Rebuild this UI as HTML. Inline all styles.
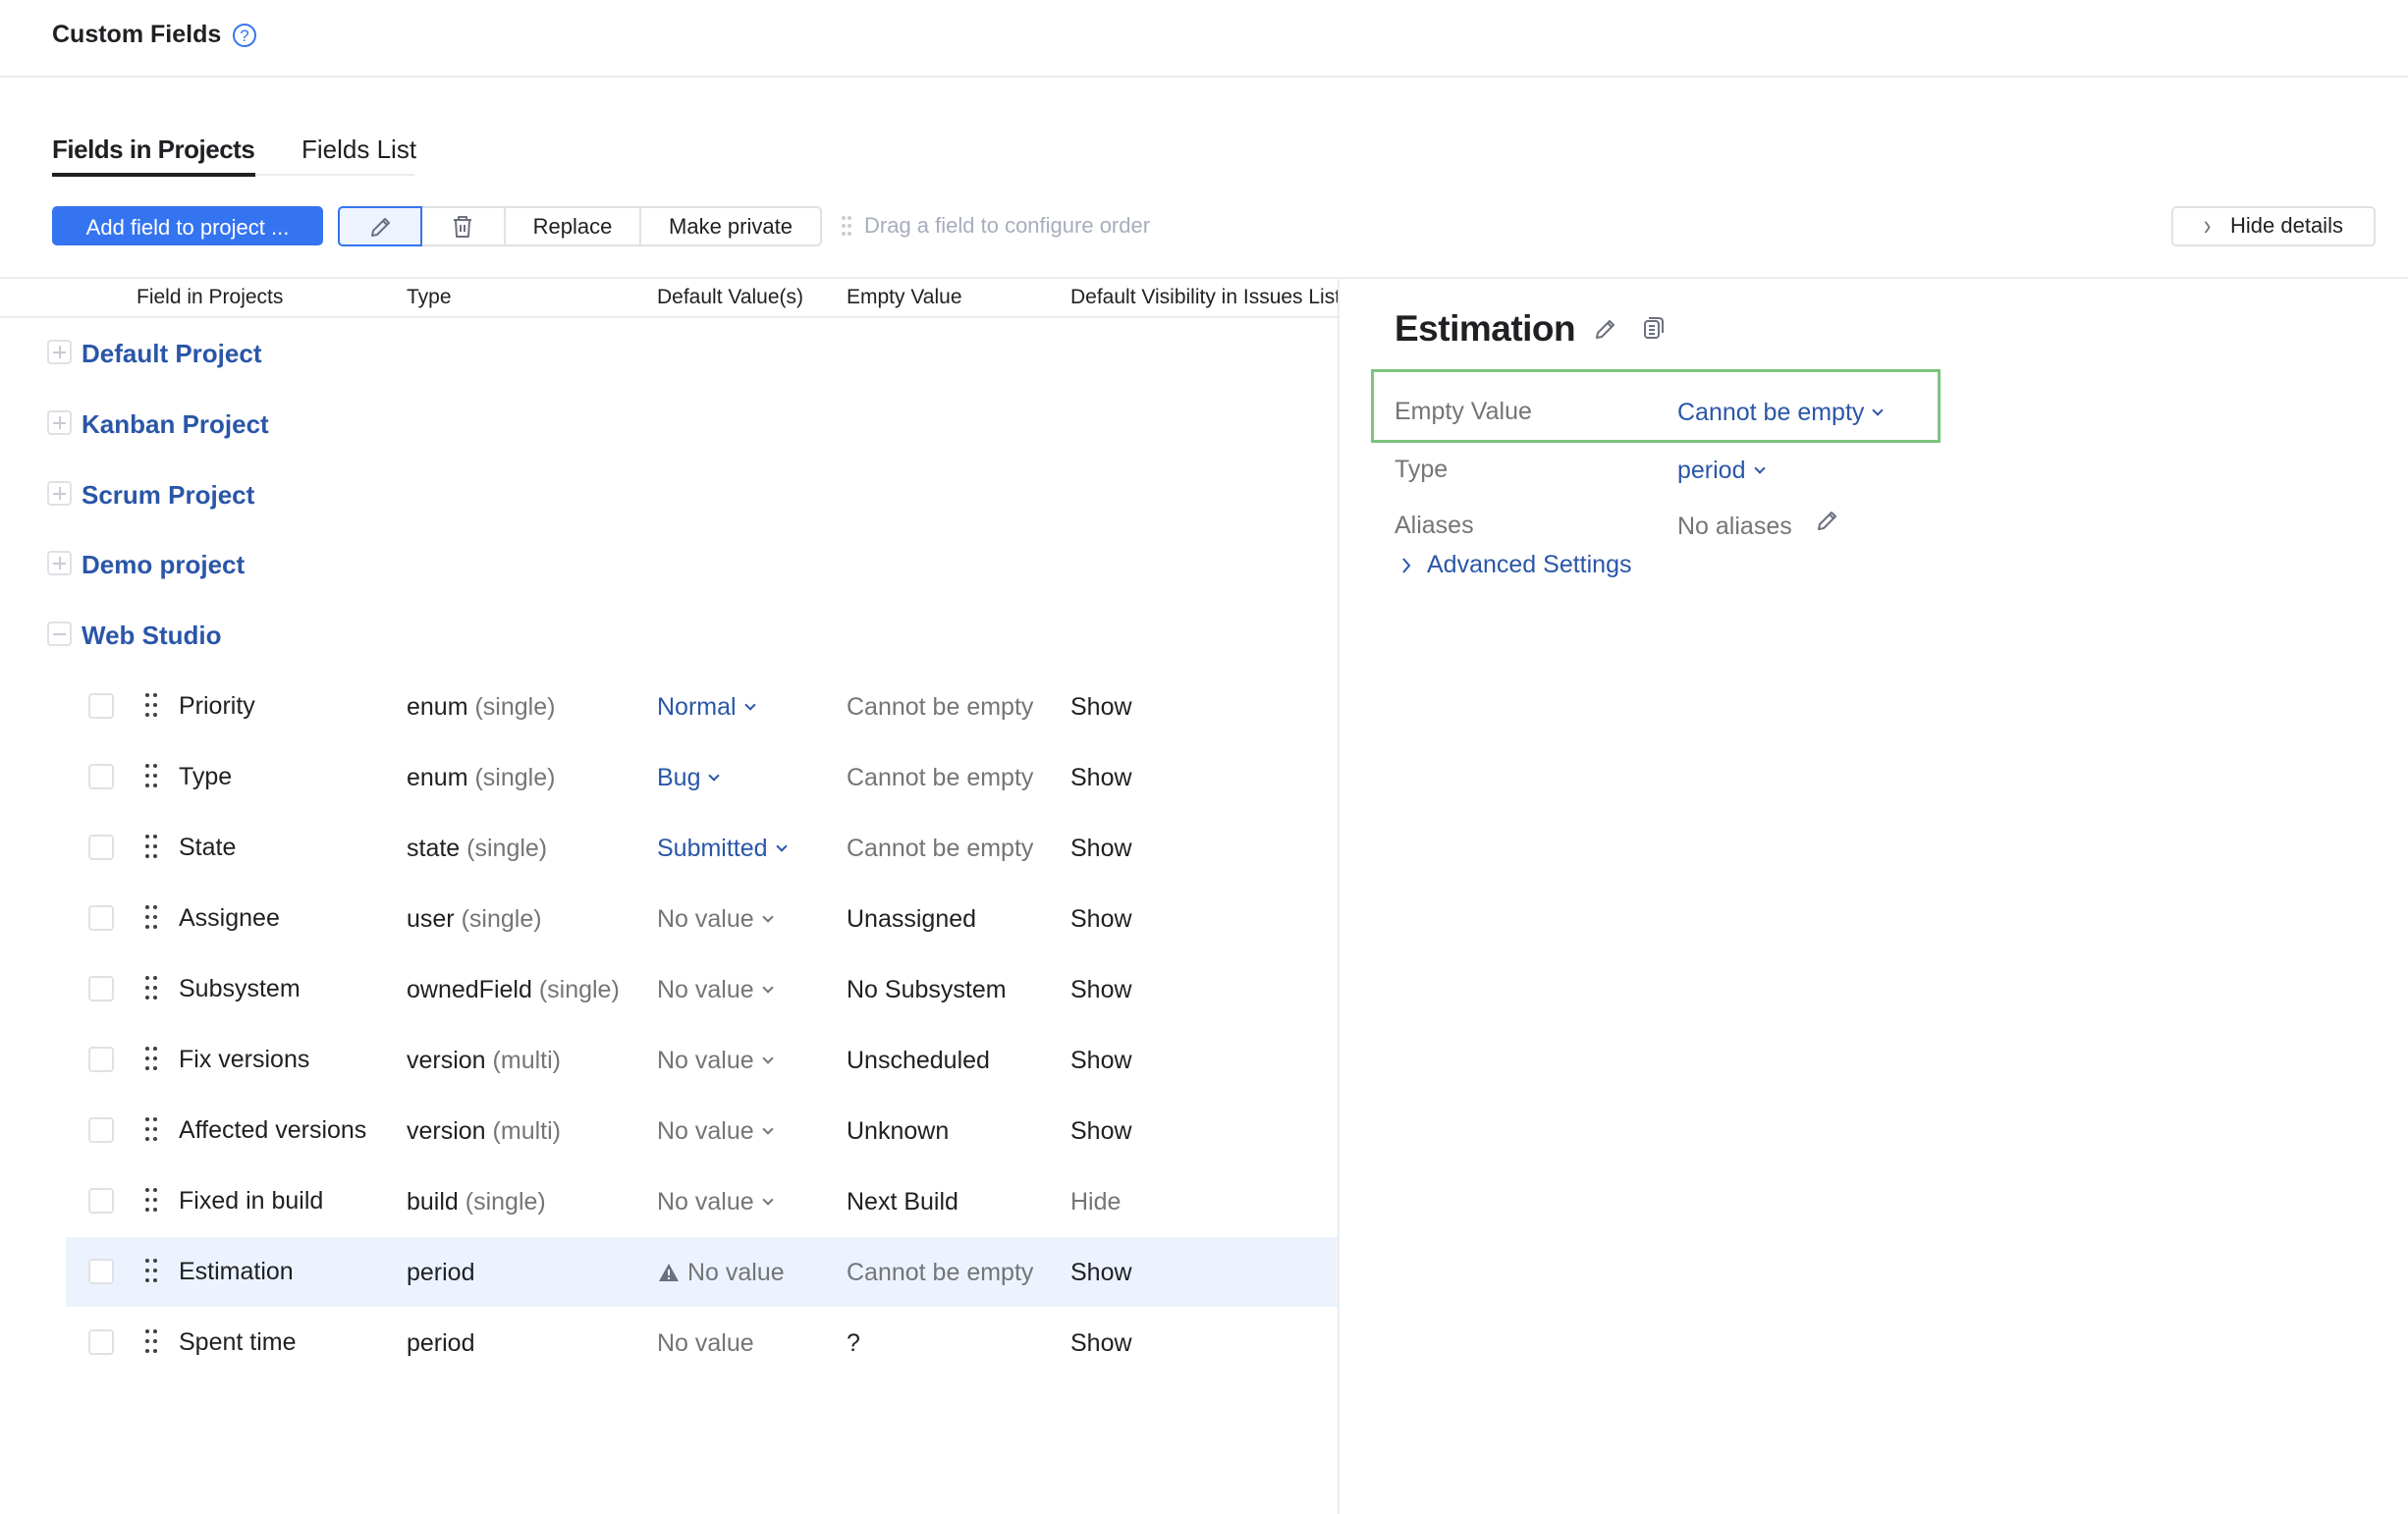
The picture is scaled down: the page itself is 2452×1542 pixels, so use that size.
<!DOCTYPE html>
<html><head><meta charset="utf-8">
<style>
*{margin:0;padding:0;box-sizing:border-box}
body{width:2452px;height:1542px;background:#fff;font-family:"Liberation Sans",sans-serif;color:#1f2023;position:relative;overflow:hidden}
.a{position:absolute;white-space:nowrap}
.t{font-size:25px;line-height:30px}
.g{color:#737577}
.b{color:#2a56a8}
.chev{display:inline-block;width:8px;height:8px;border-right:2px solid currentColor;border-bottom:2px solid currentColor;transform:rotate(45deg);margin-left:10px;position:relative;top:-6px}
.cb{position:absolute;width:26px;height:26px;border:2px solid #dfe1e5;border-radius:4px;background:#fff}
.dots{position:absolute;width:14px;height:26px}
.dots i{position:absolute;width:4px;height:4px;border-radius:50%;background:#3d3f44}
.pb{position:absolute;width:25px;height:25px;border:2px solid #dfe1e5;border-radius:4px}
.pb:before{content:"";position:absolute;left:4px;right:4px;top:10px;height:2px;background:#c9ccd2}
.pb.p:after{content:"";position:absolute;top:4px;bottom:4px;left:10px;width:2px;background:#c9ccd2}
.proj{font-size:26px;font-weight:bold;color:#2a56a8}
.btn{position:absolute;height:40px;line-height:42px;font-size:22px;text-align:center}
</style></head><body>

<div class="a" style="left:53px;top:20px;font-size:25px;font-weight:bold;line-height:30px">Custom Fields</div>
<svg class="a" style="left:236px;top:23px" width="26" height="26" viewBox="0 0 26 26"><circle cx="13" cy="13" r="11" fill="none" stroke="#3574f0" stroke-width="2"/><text x="13" y="19" text-anchor="middle" font-size="17" fill="#3574f0" font-family="Liberation Sans">?</text></svg>
<div class="a" style="left:0;top:77px;width:2452px;height:2px;background:#ebecf0"></div>

<div class="a" style="left:53px;top:136px;font-size:26px;line-height:32px;font-weight:bold;letter-spacing:-0.5px">Fields in Projects</div>
<div class="a" style="left:307px;top:136px;font-size:26px;line-height:32px">Fields List</div>
<div class="a" style="left:53px;top:177px;width:369px;height:2px;background:#ebecf0"></div>
<div class="a" style="left:53px;top:176px;width:207px;height:4px;background:#1f2023"></div>

<div class="btn" style="left:53px;top:210px;width:276px;background:#3574f0;color:#fff;border-radius:5px;border:1px solid #3574f0">Add field to project ...</div>
<div class="a" style="left:344px;top:210px;width:493px;height:41px;border:2px solid #dfe1e5;border-radius:5px"></div>
<div class="a" style="left:344px;top:210px;width:86px;height:41px;border:2px solid #3574f0;border-radius:5px 0 0 5px;background:#edf3ff"></div>
<svg class="a" style="left:373px;top:217px" width="28" height="28" viewBox="0 0 28 28"><path d="M6 23 L7 18 L19 6 L23 10 L11 22 Z M17 8 L21 12" fill="none" stroke="#6c707e" stroke-width="2" stroke-linejoin="round"/></svg>
<div class="a" style="left:513px;top:212px;width:2px;height:37px;background:#dfe1e5"></div>
<svg class="a" style="left:457px;top:216px" width="28" height="30" viewBox="0 0 28 30"><path d="M5 8 H23 M10 8 V5 H18 V8 M7 8 L8 25 H20 L21 8 M12 13 V20 M16 13 V20" fill="none" stroke="#6c707e" stroke-width="2" stroke-linejoin="round"/></svg>
<div class="btn" style="left:515px;top:210px;width:136px;color:#1f2023">Replace</div>
<div class="a" style="left:651px;top:212px;width:2px;height:37px;background:#dfe1e5"></div>
<div class="btn" style="left:653px;top:210px;width:182px;color:#1f2023">Make private</div>
<svg class="a" style="left:856px;top:219px" width="12" height="24"><g fill="#c9ccd2"><circle cx="3" cy="3" r="2"/><circle cx="9" cy="3" r="2"/><circle cx="3" cy="11" r="2"/><circle cx="9" cy="11" r="2"/><circle cx="3" cy="19" r="2"/><circle cx="9" cy="19" r="2"/></g></svg>
<div class="a" style="left:880px;top:216px;font-size:22px;line-height:28px;color:#a8adbd">Drag a field to configure order</div>

<div class="a" style="left:2211px;top:210px;width:208px;height:41px;border:2px solid #dfe1e5;border-radius:5px"></div>
<div class="a" style="left:2244px;top:216px;font-size:22px;line-height:28px;color:#6c707e;transform:scaleY(1.3)">›</div>
<div class="a" style="left:2271px;top:216px;font-size:22px;line-height:28px">Hide details</div>

<div class="a" style="left:0;top:282px;width:2452px;height:2px;background:#ebecf0"></div>
<div class="a" style="left:1362px;top:283px;width:2px;height:1259px;background:#ebecf0"></div>

<div class="a" style="left:0;top:286px;width:1362px;height:36px;overflow:hidden">
<div class="a" style="left:139px;top:3px;font-size:21px;line-height:28px">Field in Projects</div>
<div class="a" style="left:414px;top:3px;font-size:21px;line-height:28px">Type</div>
<div class="a" style="left:669px;top:3px;font-size:21px;line-height:28px">Default Value(s)</div>
<div class="a" style="left:862px;top:3px;font-size:21px;line-height:28px">Empty Value</div>
<div class="a" style="left:1090px;top:3px;font-size:21px;line-height:28px">Default Visibility in Issues List</div>
</div>
<div class="a" style="left:0;top:322px;width:1362px;height:2px;background:#ebecf0"></div>

<div class="pb p" style="left:48px;top:346px"></div><div class="a proj" style="left:83px;top:344px;line-height:32px">Default Project</div>
<div class="pb p" style="left:48px;top:418px"></div><div class="a proj" style="left:83px;top:416px;line-height:32px">Kanban Project</div>
<div class="pb p" style="left:48px;top:490px"></div><div class="a proj" style="left:83px;top:488px;line-height:32px">Scrum Project</div>
<div class="pb p" style="left:48px;top:561px"></div><div class="a proj" style="left:83px;top:559px;line-height:32px">Demo project</div>
<div class="pb" style="left:48px;top:633px"></div><div class="a proj" style="left:83px;top:631px;line-height:32px">Web Studio</div>

<div class="a" style="left:67px;top:1260px;width:1295px;height:71px;background:#edf3fe"></div>

<div class="cb" style="left:90px;top:706px"></div><div class="dots" style="left:148px;top:706px"><i style="left:0;top:0"></i><i style="left:8px;top:0"></i><i style="left:0;top:10px"></i><i style="left:8px;top:10px"></i><i style="left:0;top:20px"></i><i style="left:8px;top:20px"></i></div>
<div class="a t" style="left:182px;top:704px">Priority</div><div class="a t" style="left:414px;top:705px">enum <span class="g">(single)</span></div><div class="a t b" style="left:669px;top:705px">Normal<span class="chev"></span></div><div class="a t g" style="left:862px;top:705px">Cannot be empty</div><div class="a t" style="left:1090px;top:705px">Show</div>

<div class="cb" style="left:90px;top:778px"></div><div class="dots" style="left:148px;top:778px"><i style="left:0;top:0"></i><i style="left:8px;top:0"></i><i style="left:0;top:10px"></i><i style="left:8px;top:10px"></i><i style="left:0;top:20px"></i><i style="left:8px;top:20px"></i></div>
<div class="a t" style="left:182px;top:776px">Type</div><div class="a t" style="left:414px;top:777px">enum <span class="g">(single)</span></div><div class="a t b" style="left:669px;top:777px">Bug<span class="chev"></span></div><div class="a t g" style="left:862px;top:777px">Cannot be empty</div><div class="a t" style="left:1090px;top:777px">Show</div>

<div class="cb" style="left:90px;top:850px"></div><div class="dots" style="left:148px;top:850px"><i style="left:0;top:0"></i><i style="left:8px;top:0"></i><i style="left:0;top:10px"></i><i style="left:8px;top:10px"></i><i style="left:0;top:20px"></i><i style="left:8px;top:20px"></i></div>
<div class="a t" style="left:182px;top:848px">State</div><div class="a t" style="left:414px;top:849px">state <span class="g">(single)</span></div><div class="a t b" style="left:669px;top:849px">Submitted<span class="chev"></span></div><div class="a t g" style="left:862px;top:849px">Cannot be empty</div><div class="a t" style="left:1090px;top:849px">Show</div>

<div class="cb" style="left:90px;top:922px"></div><div class="dots" style="left:148px;top:922px"><i style="left:0;top:0"></i><i style="left:8px;top:0"></i><i style="left:0;top:10px"></i><i style="left:8px;top:10px"></i><i style="left:0;top:20px"></i><i style="left:8px;top:20px"></i></div>
<div class="a t" style="left:182px;top:920px">Assignee</div><div class="a t" style="left:414px;top:921px">user <span class="g">(single)</span></div><div class="a t g" style="left:669px;top:921px">No value<span class="chev"></span></div><div class="a t" style="left:862px;top:921px">Unassigned</div><div class="a t" style="left:1090px;top:921px">Show</div>

<div class="cb" style="left:90px;top:994px"></div><div class="dots" style="left:148px;top:994px"><i style="left:0;top:0"></i><i style="left:8px;top:0"></i><i style="left:0;top:10px"></i><i style="left:8px;top:10px"></i><i style="left:0;top:20px"></i><i style="left:8px;top:20px"></i></div>
<div class="a t" style="left:182px;top:992px">Subsystem</div><div class="a t" style="left:414px;top:993px">ownedField <span class="g">(single)</span></div><div class="a t g" style="left:669px;top:993px">No value<span class="chev"></span></div><div class="a t" style="left:862px;top:993px">No Subsystem</div><div class="a t" style="left:1090px;top:993px">Show</div>

<div class="cb" style="left:90px;top:1066px"></div><div class="dots" style="left:148px;top:1066px"><i style="left:0;top:0"></i><i style="left:8px;top:0"></i><i style="left:0;top:10px"></i><i style="left:8px;top:10px"></i><i style="left:0;top:20px"></i><i style="left:8px;top:20px"></i></div>
<div class="a t" style="left:182px;top:1064px">Fix versions</div><div class="a t" style="left:414px;top:1065px">version <span class="g">(multi)</span></div><div class="a t g" style="left:669px;top:1065px">No value<span class="chev"></span></div><div class="a t" style="left:862px;top:1065px">Unscheduled</div><div class="a t" style="left:1090px;top:1065px">Show</div>

<div class="cb" style="left:90px;top:1138px"></div><div class="dots" style="left:148px;top:1138px"><i style="left:0;top:0"></i><i style="left:8px;top:0"></i><i style="left:0;top:10px"></i><i style="left:8px;top:10px"></i><i style="left:0;top:20px"></i><i style="left:8px;top:20px"></i></div>
<div class="a t" style="left:182px;top:1136px">Affected versions</div><div class="a t" style="left:414px;top:1137px">version <span class="g">(multi)</span></div><div class="a t g" style="left:669px;top:1137px">No value<span class="chev"></span></div><div class="a t" style="left:862px;top:1137px">Unknown</div><div class="a t" style="left:1090px;top:1137px">Show</div>

<div class="cb" style="left:90px;top:1210px"></div><div class="dots" style="left:148px;top:1210px"><i style="left:0;top:0"></i><i style="left:8px;top:0"></i><i style="left:0;top:10px"></i><i style="left:8px;top:10px"></i><i style="left:0;top:20px"></i><i style="left:8px;top:20px"></i></div>
<div class="a t" style="left:182px;top:1208px">Fixed in build</div><div class="a t" style="left:414px;top:1209px">build <span class="g">(single)</span></div><div class="a t g" style="left:669px;top:1209px">No value<span class="chev"></span></div><div class="a t" style="left:862px;top:1209px">Next Build</div><div class="a t g" style="left:1090px;top:1209px">Hide</div>

<div class="cb" style="left:90px;top:1282px"></div><div class="dots" style="left:148px;top:1282px"><i style="left:0;top:0"></i><i style="left:8px;top:0"></i><i style="left:0;top:10px"></i><i style="left:8px;top:10px"></i><i style="left:0;top:20px"></i><i style="left:8px;top:20px"></i></div>
<div class="a t" style="left:182px;top:1280px">Estimation</div><div class="a t" style="left:414px;top:1281px">period</div>
<svg class="a" style="left:670px;top:1286px" width="22" height="20" viewBox="0 0 22 20"><path d="M11 1 L21 19 H1 Z" fill="#6c707e"/><rect x="10" y="7" width="2" height="6" fill="#fff"/><rect x="10" y="15" width="2" height="2" fill="#fff"/></svg>
<div class="a t g" style="left:700px;top:1281px">No value</div><div class="a t g" style="left:862px;top:1281px">Cannot be empty</div><div class="a t" style="left:1090px;top:1281px">Show</div>

<div class="cb" style="left:90px;top:1354px"></div><div class="dots" style="left:148px;top:1354px"><i style="left:0;top:0"></i><i style="left:8px;top:0"></i><i style="left:0;top:10px"></i><i style="left:8px;top:10px"></i><i style="left:0;top:20px"></i><i style="left:8px;top:20px"></i></div>
<div class="a t" style="left:182px;top:1352px">Spent time</div><div class="a t" style="left:414px;top:1353px">period</div><div class="a t g" style="left:669px;top:1353px">No value</div><div class="a t" style="left:862px;top:1353px">?</div><div class="a t" style="left:1090px;top:1353px">Show</div>

<div class="a" style="left:1420px;top:313px;font-size:37px;font-weight:bold;line-height:44px;letter-spacing:-0.5px">Estimation</div>
<svg class="a" style="left:1622px;top:322px" width="26" height="26" viewBox="0 0 26 26"><path d="M4 22 L5 17 L17 5 L21 9 L9 21 Z M15 7 L19 11" fill="none" stroke="#6c707e" stroke-width="2" stroke-linejoin="round"/></svg>
<svg class="a" style="left:1671px;top:320px" width="26" height="28" viewBox="0 0 26 28"><rect x="4" y="7" width="14" height="17" rx="3" fill="none" stroke="#6c707e" stroke-width="2"/><path d="M8 4 H18 Q22 4 22 8 V19" fill="none" stroke="#6c707e" stroke-width="2"/><path d="M8 12 H14 M8 16 H14 M8 20 H14" stroke="#6c707e" stroke-width="2"/></svg>

<div class="a" style="left:1396px;top:376px;width:580px;height:75px;border:3px solid #7dc47f"></div>
<div class="a t g" style="left:1420px;top:404px">Empty Value</div>
<div class="a t b" style="left:1708px;top:405px">Cannot be empty<span class="chev"></span></div>
<div class="a t g" style="left:1420px;top:463px">Type</div>
<div class="a t b" style="left:1708px;top:464px">period<span class="chev"></span></div>
<div class="a t g" style="left:1420px;top:520px">Aliases</div>
<div class="a t g" style="left:1708px;top:521px">No aliases</div>
<svg class="a" style="left:1848px;top:517px" width="26" height="26" viewBox="0 0 26 26"><path d="M4 22 L5 17 L17 5 L21 9 L9 21 Z M15 7 L19 11" fill="none" stroke="#6c707e" stroke-width="2" stroke-linejoin="round"/></svg>
<svg class="a" style="left:1425px;top:566px" width="14" height="20" viewBox="0 0 14 20"><path d="M4 3 L10 10 L4 17" fill="none" stroke="#2a56a8" stroke-width="2"/></svg>
<div class="a t b" style="left:1453px;top:560px">Advanced Settings</div>

</body></html>
